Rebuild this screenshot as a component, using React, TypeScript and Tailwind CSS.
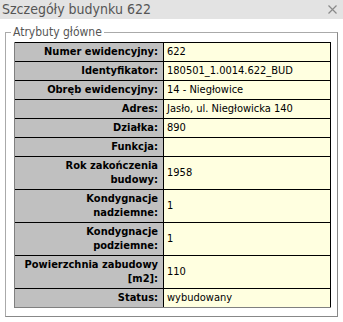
const rows: { label: string; value: string }[] = [
  { label: 'Numer ewidencyjny:', value: '622' },
  { label: 'Identyfikator:', value: '180501_1.0014.622_BUD' },
  { label: 'Obręb ewidencyjny:', value: '14 - Niegłowice' },
  { label: 'Adres:', value: 'Jasło, ul. Niegłowicka 140' },
  { label: 'Działka:', value: '890' },
  { label: 'Funkcja:', value: '' },
  { label: 'Rok zakończenia budowy:', value: '1958' },
  { label: 'Kondygnacje nadziemne:', value: '1' },
  { label: 'Kondygnacje podziemne:', value: '1' },
  { label: 'Powierzchnia zabudowy [m2]:', value: '110' },
  { label: 'Status:', value: 'wybudowany' },
]

const font = "font-['DejaVu_Sans_Condensed','Liberation_Sans',sans-serif]"

export default function App() {
  return (
    <div className={`w-[343px] h-[322px] bg-white ${font} overflow-hidden`}>
      <div className="h-[19px] bg-[#e3e3e3] flex items-center justify-between pl-[2px] pr-[6px]">
        <span className="text-[14px] leading-[19px] text-[#555555]">Szczegóły budynku 622</span>
        <svg width="9" height="9" viewBox="0 0 9 9" className="mt-[-1px]">
          <path d="M0.5 0.5 L8.5 8.5 M8.5 0.5 L0.5 8.5" stroke="#8a8a8a" strokeWidth="1.2" fill="none" />
        </svg>
      </div>

      <fieldset className="mx-[5px] mt-[6px] pl-[8px] pr-[6px] pt-[3px] pb-[8px] border border-t-[#aaaaaa] border-l-[#aaaaaa] border-r-[#888888] border-b-[#888888]">
        <legend className="ml-[-3px] px-[2px] text-[12px] leading-[14px] text-[#555555]">Atrybuty główne</legend>
        <div className="border-l border-b border-[#808080]">
          {rows.map((r) => (
            <div key={r.label} className="flex border-t border-black">
              <div className="w-[149px] shrink-0 bg-[#c0c0c0] border-r border-black pl-[6px] pr-[5px] py-[2px] text-right text-[11px] leading-[14px] font-bold text-black">
                {r.label}
              </div>
              <div className="flex-1 bg-[#ffffe0] border-r border-black pl-[3px] py-[2px] flex items-center text-[11px] leading-[14px] text-black">
                {r.value}
              </div>
            </div>
          ))}
        </div>
      </fieldset>
    </div>
  )
}
